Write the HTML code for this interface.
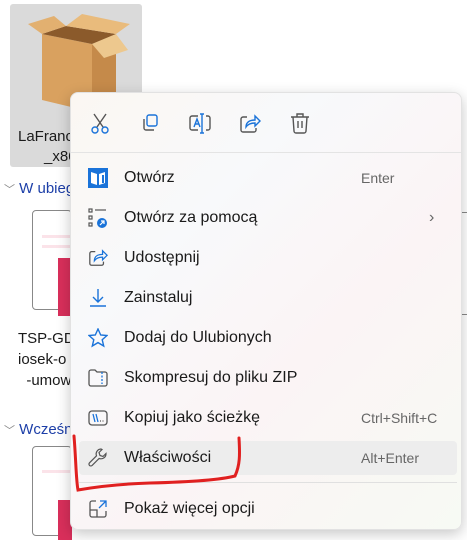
<!DOCTYPE html>
<html><head><meta charset="utf-8"><style>
*{margin:0;padding:0;box-sizing:border-box}
body{width:467px;height:533px;overflow:hidden;background:#fff;position:relative;font-family:"Liberation Sans",sans-serif;color:#1a1a1a}
.abs{position:absolute}
.menu{left:70px;top:92px;width:392px;height:438px;border-radius:8px;background:linear-gradient(135deg,#fbf7f2 0%,#f8f9fb 30%,#fbf4f5 60%,#f7faf4 100%);box-shadow:0 4px 14px rgba(0,0,0,.22);border:1px solid #e2e2e2}
.item{position:absolute;left:0;width:392px;height:34px;font-size:16px;line-height:34px}
.item .t{position:absolute;left:53px}
.item .k{position:absolute;left:290px;font-size:14px;color:#666}
.item svg{position:absolute;left:17px;top:7px}
</style></head><body>
<div class="abs" style="left:10px;top:4px;width:132px;height:163px;background:#dadada;border-radius:3px"></div>
<svg class="abs" style="left:22px;top:12px" width="110" height="100" viewBox="0 0 110 100">
<polygon points="20,22 70,32 70,100 20,88" fill="#d9a15f"/>
<polygon points="70,32 94,22 94,88 70,100" fill="#c58a4a"/>
<polygon points="20,22 44,14 94,22 70,32" fill="#8b5a2b"/>
<polygon points="20,22 6,12 32,4 44,14" fill="#e2b070"/>
<polygon points="44,14 60,2 108,12 94,22" fill="#e9bb7c"/>
<polygon points="70,32 94,22 106,38 82,46" fill="#edc88e"/>
</svg>
<div class="abs" style="left:18px;top:128px;font-size:15px">LaFranc</div>
<div class="abs" style="left:44px;top:148px;font-size:15px">_x86</div>
<div class="abs" style="left:4px;top:180px;font-size:15px;color:#1d3fa8"><span style="color:#888;font-size:11px">﹀</span> W ubieg</div>
<div class="abs" style="left:32px;top:210px;width:40px;height:100px;border:1px solid #888;border-radius:4px"></div>
<div class="abs" style="left:42px;top:235px;width:30px;height:3px;background:#fbe3e9"></div>
<div class="abs" style="left:42px;top:245px;width:30px;height:3px;background:#fbe3e9"></div>
<div class="abs" style="left:58px;top:258px;width:14px;height:58px;background:#d92f5b"></div>
<div class="abs" style="left:18px;top:328px;font-size:15px;line-height:21px">TSP-GD<br>iosek-o<br>&nbsp;&nbsp;-umow</div>
<div class="abs" style="left:4px;top:421px;font-size:15px;color:#1d3fa8"><span style="color:#888;font-size:11px">﹀</span> Wcześn</div>
<div class="abs" style="left:32px;top:446px;width:40px;height:90px;border:1px solid #888;border-radius:4px"></div>
<div class="abs" style="left:42px;top:470px;width:30px;height:3px;background:#fbe3e9"></div>
<div class="abs" style="left:58px;top:500px;width:14px;height:40px;background:#d92f5b"></div>
<div class="abs" style="left:462px;top:212px;width:5px;height:1px;background:#888"></div>
<div class="abs" style="left:462px;top:314px;width:5px;height:1px;background:#888"></div>

<div class="abs menu">
<svg class="abs" style="left:18px;top:20px" width="22" height="22" viewBox="0 0 22 22" fill="none" stroke-width="1.4"><path d="M5 1l9 13M17 1L8 14" stroke="#555"/><circle cx="6" cy="17" r="3" stroke="#1a73d9"/><circle cx="16" cy="17" r="3" stroke="#1a73d9"/></svg>
<svg class="abs" style="left:68px;top:20px" width="22" height="22" viewBox="0 0 22 22" fill="none" stroke-width="1.4"><rect x="8" y="2" width="10" height="11" rx="2" stroke="#1a73d9"/><path d="M5 6v9a2 2 0 0 0 2 2h8" stroke="#555"/></svg>
<svg class="abs" style="left:117px;top:20px" width="24" height="22" viewBox="0 0 24 22" fill="none" stroke-width="1.4"><path d="M10 3H4a2 2 0 0 0-2 2v10a2 2 0 0 0 2 2h6M18 3h2a2 2 0 0 1 2 2v10a2 2 0 0 1-2 2h-2" stroke="#555"/><path d="M14 1v19M12 1h4M12 20h4M6 14l3-8 3 8M7 11h4" stroke="#1a73d9"/></svg>
<svg class="abs" style="left:168px;top:20px" width="22" height="22" viewBox="0 0 22 22" fill="none" stroke-width="1.4"><path d="M8 4H4a2 2 0 0 0-2 2v11a2 2 0 0 0 2 2h11a2 2 0 0 0 2-2v-2" stroke="#555"/><path d="M7 14c0-5 4-7 9-7V3l5 5-5 5V10c-4 0-7 1-9 4z" stroke="#1a73d9"/></svg>
<svg class="abs" style="left:218px;top:19px" width="22" height="22" viewBox="0 0 22 22" fill="none" stroke="#555" stroke-width="1.4"><path d="M2 5h18M8 5V2h6v3M4 5l1 14a2 2 0 0 0 2 2h8a2 2 0 0 0 2-2l1-14M9 9v7M13 9v7"/></svg>
<div class="abs" style="left:0;top:59px;width:390px;height:1px;background:#e4e4e4"></div>

<div class="item" style="top:68px"><svg width="20" height="20" viewBox="0 0 20 20"><rect x="0" y="0" width="20" height="20" fill="#1a73d9"/><path d="M3 4l6 2v11l-6-2zM11 6l6-2v11l-6 2z" fill="#fff"/><rect x="14" y="7" width="2" height="8" fill="#1a73d9"/></svg><span class="t">Otwórz</span><span class="k">Enter</span></div>
<div class="item" style="top:108px"><svg width="20" height="20" viewBox="0 0 20 20" fill="none" stroke="#555" stroke-width="1.2"><rect x="1" y="1" width="3" height="3"/><rect x="1" y="8" width="3" height="3"/><rect x="1" y="15" width="3" height="3"/><path d="M7 2h11"/><circle cx="14" cy="15" r="5" fill="#1a73d9" stroke="none"/><path d="M12 17l4-4M13 13h3v3" stroke="#fff"/></svg><span class="t">Otwórz za pomocą</span><span style="position:absolute;left:358px;color:#666;font-size:16px">›</span></div>
<div class="item" style="top:148px"><svg width="20" height="20" viewBox="0 0 22 22" fill="none" stroke-width="1.4"><path d="M8 4H4a2 2 0 0 0-2 2v11a2 2 0 0 0 2 2h11a2 2 0 0 0 2-2v-2" stroke="#555"/><path d="M7 14c0-5 4-7 9-7V3l5 5-5 5V10c-4 0-7 1-9 4z" stroke="#1a73d9"/></svg><span class="t">Udostępnij</span></div>
<div class="item" style="top:188px"><svg width="20" height="20" viewBox="0 0 20 20" fill="none" stroke="#1a73d9" stroke-width="1.4"><path d="M10 1v13M5 9l5 5 5-5M2 18h16"/></svg><span class="t">Zainstaluj</span></div>
<div class="item" style="top:228px"><svg width="20" height="20" viewBox="0 0 20 20" fill="none" stroke="#1a73d9" stroke-width="1.4"><path d="M10 1l2.7 6 6.3.5-4.8 4.2 1.5 6.3L10 14.6 4.3 18l1.5-6.3L1 7.5 7.3 7z"/></svg><span class="t">Dodaj do Ulubionych</span></div>
<div class="item" style="top:268px"><svg width="20" height="20" viewBox="0 0 20 20" fill="none" stroke-width="1.3"><path d="M1 4a2 2 0 0 1 2-2h4l2 2h8a2 2 0 0 1 2 2v10a2 2 0 0 1-2 2H3a2 2 0 0 1-2-2z" stroke="#555"/><path d="M14 4v12" stroke="#1a73d9" stroke-dasharray="2 1.5"/></svg><span class="t">Skompresuj do pliku ZIP</span></div>
<div class="item" style="top:308px"><svg width="20" height="20" viewBox="0 0 20 20" fill="none" stroke-width="1.3"><rect x="1" y="3" width="18" height="14" rx="3" stroke="#555"/><path d="M5 6l2 8M8 6l2 8" stroke="#1a73d9"/><path d="M12 13h1M14.5 13h1" stroke="#555"/></svg><span class="t">Kopiuj jako ścieżkę</span><span class="k">Ctrl+Shift+C</span></div>
<div class="item" style="top:348px;left:8px;width:378px;background:#ededed;border-radius:4px"></div>
<div class="item" style="top:348px"><svg width="20" height="20" viewBox="0 0 20 20" fill="none" stroke="#555" stroke-width="1.2"><path d="M13 1a5 5 0 0 0-4.5 6.8L1.5 14.8a1.8 1.8 0 0 0 2.6 2.6l7-7A5 5 0 0 0 18 5.5l-3 3-3-1-1-3 3-3z"/></svg><span class="t">Właściwości</span><span class="k">Alt+Enter</span></div>
<div class="abs" style="left:8px;top:389px;width:378px;height:1px;background:#e0e0e0"></div>
<div class="item" style="top:399px"><svg width="20" height="20" viewBox="0 0 20 20" fill="none" stroke-width="1.3"><path d="M8 2H4a2 2 0 0 0-2 2v12a2 2 0 0 0 2 2h12a2 2 0 0 0 2-2v-4M2 11h7v7" stroke="#555"/><path d="M12 2h6v6M18 2l-7 7" stroke="#1a73d9"/></svg><span class="t">Pokaż więcej opcji</span></div>
</div>
<svg class="abs" style="left:0;top:0" width="467" height="533"><path d="M74 436 C76 460 76 480 78 490 C100 486 120 484 150 483 C190 482 220 480 235 476 C240 465 240 455 239 438" fill="none" stroke="#e02020" stroke-width="3" stroke-linecap="round"/></svg>
</body></html>
